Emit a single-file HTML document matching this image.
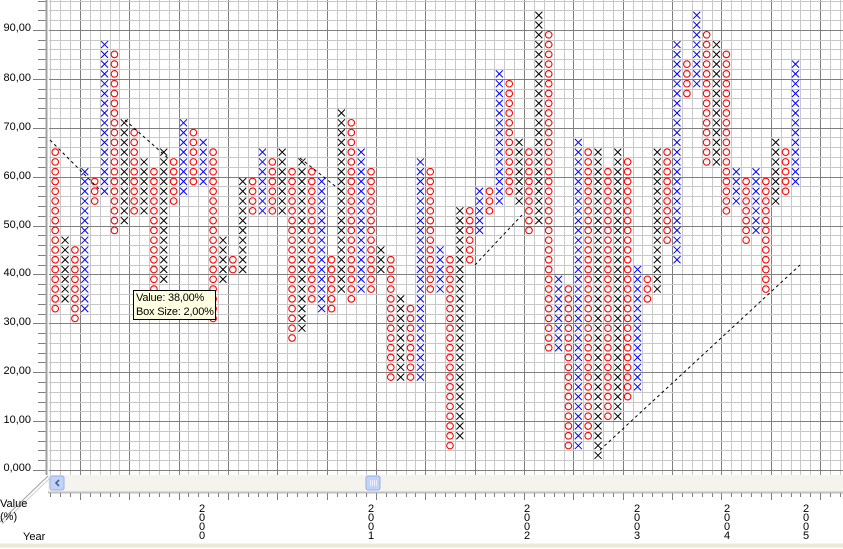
<!DOCTYPE html>
<html><head><meta charset="utf-8"><style>
body{margin:0;width:843px;height:549px;overflow:hidden;background:#fff;font-family:"Liberation Sans",sans-serif;position:relative}
.yl{position:absolute;left:0;width:31px;text-align:right;font-size:11px;color:#000}
.yr{position:absolute;font-size:11px;line-height:9px;text-align:center;width:10px}
</style></head><body>
<svg id="s" width="843" height="549" style="position:absolute;left:0;top:0"></svg>
<div class="yl" style="top:22px">90,00</div>
<div class="yl" style="top:72px">80,00</div>
<div class="yl" style="top:121px">70,00</div>
<div class="yl" style="top:170px">60,00</div>
<div class="yl" style="top:219px">50,00</div>
<div class="yl" style="top:267px">40,00</div>
<div class="yl" style="top:316px">30,00</div>
<div class="yl" style="top:365px">20,00</div>
<div class="yl" style="top:414px">10,00</div>
<div class="yl" style="top:462px">0,000</div>
<div style="position:absolute;left:0;top:498px;font-size:11px;line-height:13px">Value<br>(%)</div>
<div style="position:absolute;left:23px;top:531px;font-size:11px">Year</div>
<div class="yr" style="left:197px;top:505px">2<br>0<br>0<br>0</div>
<div class="yr" style="left:366px;top:505px">2<br>0<br>0<br>1</div>
<div class="yr" style="left:522px;top:505px">2<br>0<br>0<br>2</div>
<div class="yr" style="left:632px;top:505px">2<br>0<br>0<br>3</div>
<div class="yr" style="left:722px;top:505px">2<br>0<br>0<br>4</div>
<div class="yr" style="left:801px;top:505px">2<br>0<br>0<br>5</div>
<div style="position:absolute;left:133px;top:290px;width:83px;height:30px;background:#ffffe1;border:1px solid #000;font-size:11px;line-height:14px;padding-left:2px;box-sizing:border-box;white-space:nowrap;letter-spacing:-0.2px">Value: 38,00%<br>Box Size: 2,00%</div>
<script>
var s=document.getElementById('s'),h='';
function L(x1,y1,x2,y2,c,w,d){h+='<line x1="'+x1+'" y1="'+y1+'" x2="'+x2+'" y2="'+y2+'" stroke="'+c+'" stroke-width="'+(w||1)+'"'+(d?' stroke-dasharray="'+d+'"':'')+'/>';}
h+='<rect x="48" y="0" width="795" height="475" fill="#fff"/>';
for(var k=0;k<81;k++){var x=Math.round(50.3+9.87*k)+.5;if(x>843)break;L(x,0,x,475,(k%5==3)?'#808080':'#c8c8c8');}
for(var r=0;r<49;r++){var y=Math.round(470-9.78*r)+.5;if(y<0)break;L(48,y,843,y,(r%5==0)?'#808080':'#c8c8c8');}
for(var r=0;r<49;r++){var y=Math.round(470-9.78*r)+.5;if(y<0)break;L(r%5==0?33:38,y,46,y,'#808080');}
var D=[['O','r',148,312],['X','k',240,300],['O','r',250,322],['X','b',175,312],['O','r',180,205],['X','b',42,190],['O','r',55,235],['X','k',125,225],['O','r',130,215],['X','k',160,215],['O','r',168,285],['X','k',150,280],['O','r',160,205],['X','b',120,195],['O','r',135,180],['X','b',140,180],['O','r',155,322],['X','k',240,275],['O','r',260,270],['X','k',180,265],['O','r',185,215],['X','b',150,210],['O','r',160,215],['X','k',148,210],['O','r',170,340],['X','k',160,325],['O','r',175,300],['X','b',180,305],['O','r',260,310],['X','k',110,290],['O','r',125,295],['X','b',155,285],['O','r',175,285],['X','k',250,270],['O','r',260,380],['X','k',300,375],['O','r',310,380],['X','b',160,375],['O','r',170,285],['X','b',250,285],['O','r',260,450],['X','k',210,440],['O','r',215,255],['X','b',190,230],['O','r',195,210],['X','b',70,205],['O','r',80,195],['X','k',140,205],['O','r',150,235],['X','k',20,225],['O','r',35,350],['X','b',280,345],['O','r',290,450],['X','b',140,445],['O','r',150,440],['X','k',150,455],['O','r',170,420],['X','k',150,420],['O','r',165,400],['X','b',270,390],['O','r',280,300],['X','k',150,290],['O','r',155,240],['X','b',40,255],['O','r',65,90],['X','b',20,80],['O','r',30,165],['X','k',40,160],['O','r',55,215],['X','b',170,200],['O','r',180,245],['X','b',170,235],['O','r',180,285],['X','k',140,200],['O','r',150,190],['X','b',60,185]];
var C={r:'#ff0000',k:'#000',b:'#0000ff'};
D.forEach(function(d,i){var cx=55.2+9.87*i;var c=C[d[1]];
var r1=Math.floor((470-d[3])/9.78),r2=Math.floor((470-d[2])/9.78);
for(var r=r1;r<=r2;r++){var cy=470-9.78*(r+.5);
if(d[0]=='X'){L(cx-3.5,cy-3.5,cx+3.5,cy+3.5,c,1);L(cx+3.5,cy-3.5,cx-3.5,cy+3.5,c,1);}
else h+='<circle cx="'+cx+'" cy="'+cy+'" r="3.3" fill="none" stroke="'+c+'" stroke-width="1.1"/>';}});
L(50,140,100,190,'#000',1,'3,3');L(125,120,170,160,'#000',1,'3,3');L(300,158,340,190,'#000',1,'3,3');
L(475,265,522,215,'#000',1,'3,3');L(600,450,800,265,'#000',1,'3,3');
L(46.5,0,46.5,475,'#a0a0a0',2);L(48.5,0,48.5,475,'#fff',1);
h+='<rect x="48" y="475" width="795" height="17" fill="#f4f3ee"/>';
h+='<rect x="50" y="476" width="14" height="14" rx="2" fill="#c1d3fb" stroke="#9bb0e0"/>';
h+='<path d="M59 480l-3 3 3 3" fill="none" stroke="#4d6185" stroke-width="1.6"/>';
h+='<rect x="366" y="476" width="14" height="14" rx="2" fill="#c1d3fb" stroke="#9bb0e0"/>';
L(370.5,480,370.5,486,'#eef');L(372.5,480,372.5,486,'#eef');L(374.5,480,374.5,486,'#eef');L(376.5,480,376.5,486,'#eef');
L(48,492.5,843,492.5,'#c0c0c0',2);L(0,545.5,843,545.5,'#ece9d8',4);
L(0,522,48,476,'#a0a0a0',1);L(2,524,50,478,'#d0d0d0',1);
for(var k=0;k<81;k++){var x=Math.round(50.3+9.87*k)+.5;if(x>843)break;L(x,493,x,(k%5==3)?500:497,'#808080');}
s.innerHTML=h;
</script>
</body></html>
